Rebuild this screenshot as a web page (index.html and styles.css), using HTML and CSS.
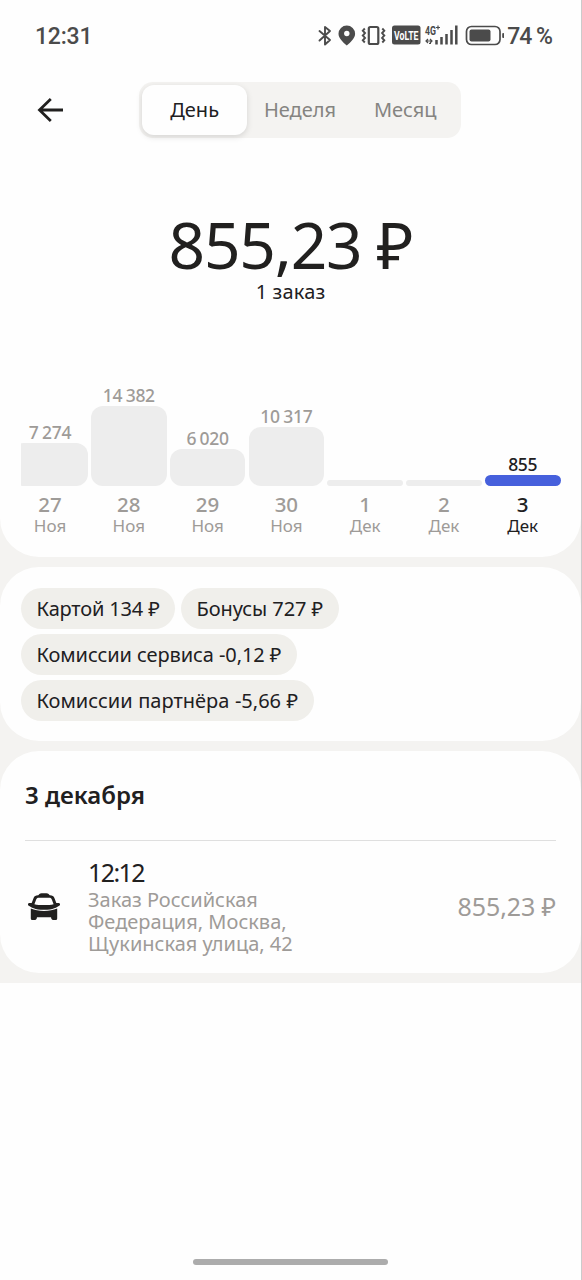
FILE: index.html
```html
<!DOCTYPE html>
<html lang="ru">
<head>
<meta charset="utf-8">
<title>Заработок</title>
<link rel="stylesheet" href="styles.css">
</head>
<body>
<div class="app">
  <div class="page">
    <section class="card card-top">
      <div class="status">
        <span class="clock">12:31</span>
        <div class="status-right">
          <svg class="status-icons" width="187" height="24" viewBox="316 24 187 24">
            <path d="M318.5 31 L329 40 L324 44.5 V27 L329 31 L318.5 40.5" fill="none" stroke="#4b4b4b" stroke-width="1.9" stroke-linejoin="round" stroke-linecap="round"/>
            <path d="M345.800 25.500a8.300 8.300 0 0 0-8.300 8.300c0 4.500 4.500 8.500 8.300 11.700c3.800-3.200 8.300-7.200 8.300-11.700a8.300 8.300 0 0 0-8.300-8.300z" fill="#4b4b4b"/>
            <circle cx="345.800" cy="33.500" r="2.700" fill="#fff"/>
            <rect x="367.800" y="27" width="9.500" height="17" rx="1.500" fill="none" stroke="#4b4b4b" stroke-width="2.200"/>
            <path d="M363.800 28.500l-2 2.200 2.200 2.400-2.200 2.400 2.200 2.400-2.200 2.400 2 2.200M381.300 28.500l2 2.200-2.200 2.400 2.200 2.400-2.200 2.400 2.200 2.400-2 2.200" fill="none" stroke="#4b4b4b" stroke-width="1.900"/>
            <rect x="391" y="25.500" width="28.500" height="19" rx="2.500" fill="#4b4b4b"/>
            <text x="393" y="39.500" class="volte" textLength="24.500" lengthAdjust="spacingAndGlyphs">VoLTE</text>
            <text x="424" y="35" class="net" textLength="11" lengthAdjust="spacingAndGlyphs">4G</text>
            <path d="M435 27.500h4M437 25.500v4" stroke="#4b4b4b" stroke-width="1.200"/>
            <path d="M425 41h6M427 39l-2 2 2 2M430 43.500h-2M429 39l2 2-2 2" fill="none" stroke="#4b4b4b" stroke-width="1.200"/>
            <path d="M435.500 40v4.500M440.500 37v7.500M445.500 34v10.500M450.500 30v14.500M455.300 25.500v19" stroke="#4b4b4b" stroke-width="2.500"/>
            <rect x="465.500" y="26.500" width="33.500" height="18" rx="5" fill="none" stroke="#4b4b4b" stroke-width="1.700"/>
            <rect x="468.500" y="29.500" width="21" height="12" rx="2" fill="#4b4b4b"/>
            <rect x="501.200" y="33" width="2" height="5" rx="1" fill="#4b4b4b"/>
          </svg>
          <span class="percent">74 %</span>
        </div>
      </div>

      <div class="toolbar">
        <svg class="back" width="28" height="28" viewBox="37 96 28 28">
          <path d="M63 110H39.500M50.800 99L39.500 110L50.800 121" fill="none" stroke="#21201f" stroke-width="2.800"/>
        </svg>
        <div class="tabs">
          <span class="tab tab-active">День</span>
          <span class="tab tab-week">Неделя</span>
          <span class="tab tab-month">Месяц</span>
        </div>
      </div>

      <div class="total">855,23 ₽</div>
      <div class="orders">1 заказ</div>

      <div class="chart">
        <div class="col"><span class="value">7 274</span><div class="bar" style="height:43.500px"></div><span class="day">27</span><span class="month">Ноя</span></div>
        <div class="col"><span class="value">14 382</span><div class="bar" style="height:80.500px"></div><span class="day">28</span><span class="month">Ноя</span></div>
        <div class="col"><span class="value">6 020</span><div class="bar" style="height:37px"></div><span class="day">29</span><span class="month">Ноя</span></div>
        <div class="col"><span class="value">10 317</span><div class="bar" style="height:59px"></div><span class="day">30</span><span class="month">Ноя</span></div>
        <div class="col"><div class="bar" style="height:6px"></div><span class="day">1</span><span class="month">Дек</span></div>
        <div class="col"><div class="bar" style="height:6px"></div><span class="day">2</span><span class="month">Дек</span></div>
        <div class="col col-active"><span class="value">855</span><div class="bar" style="height:11px"></div><span class="day">3</span><span class="month">Дек</span></div>
      </div>
    </section>

    <section class="card chips">
      <span class="chip chip-card">Картой 134 ₽</span>
      <span class="chip chip-bonus">Бонусы 727 ₽</span>
      <span class="chip chip-service">Комиссии сервиса -0,12 ₽</span>
      <span class="chip chip-partner">Комиссии партнёра -5,66 ₽</span>
    </section>

    <section class="card history">
      <h2 class="date">3 декабря</h2>
      <div class="order">
        <svg class="car" width="34" height="30" viewBox="27 892 34 30">
          <path d="M38 896.500c.5-2.500 2-3.300 3.500-3.300h5c1.500 0 3 .8 3.500 3.300z" fill="#21201f"/>
          <path fill-rule="evenodd" d="M38 895.300h12c2.300 0 3.700.8 4.500 3l1.800 4.700h2.200c1.600 0 2.200 2 .8 2.700c-2.600 1.400-5.700 4.100-15.300 4.100s-12.700-2.700-15.300-4.100c-1.400-.7-.8-2.700.8-2.700h2.200l1.800-4.700c.8-2.200 2.200-3 4.500-3zM39 897.800c-1.700 0-2.500.6-3 2.100l-1.600 4.300c5 1.200 14.200 1.200 19.200 0l-1.600-4.300c-.5-1.500-1.300-2.100-3-2.100z" fill="#21201f"/>
          <path d="M30.800 908.500c4 1.700 8 2.400 13.200 2.400s9.200-.7 13.200-2.400v10q0 1.500-1.500 1.500h-3q-1.500 0-1.700-2.700h-14q-.2 2.700-1.700 2.700h-3q-1.500 0-1.500-1.500z" fill="#21201f"/>
        </svg>
        <div class="details">
          <span class="time">12:12</span>
          <p class="address"><span class="a1">Заказ Российская</span><br><span class="a2">Федерация, Москва,</span><br><span class="a3">Щукинская улица, 42</span></p>
        </div>
        <span class="price">855,23 ₽</span>
      </div>
    </section>
  </div>
  <div class="home-indicator"></div>
</div>
</body>
</html>
```
FILE: styles.css
```css
* { box-sizing: border-box; }
body { margin: 0; background: #fefefe; font-family: "Noto Sans", "Open Sans", sans-serif; color: #21201f; }
.app { height: 1280px; border-right: 1px solid #cbcbcb; display: flex; flex-direction: column; background: #fefefe; overflow: hidden; }
.page { background: #f4f3f1; display: flex; flex-direction: column; gap: 10px; padding-bottom: 9.500px; white-space: nowrap; }
.card { background: #fefefe; border-radius: 39px; }
.card-top { height: 557px; border-radius: 0 0 39px 39px; display: flex; flex-direction: column; }

.status { height: 73px; padding: 0 30px 0 35px; display: flex; align-items: center; justify-content: space-between; font-family: Roboto, sans-serif; font-weight: 500; font-size: 23px; line-height: 24px; color: #4b4b4b; }
.clock { letter-spacing: -.2px; }
.status-right { display: flex; align-items: center; gap: 3.500px; }
.status-icons { margin-top: -1px; }
.percent { letter-spacing: -1px; margin-right: -1px; }
.volte { font: 700 12px Roboto, sans-serif; fill: #fff; }
.net { font: 700 12px Roboto, sans-serif; fill: #4b4b4b; }

.toolbar { height: 74px; padding: 0 0 0 37px; display: flex; align-items: center; }
.tabs { margin-left: 74px; width: 322px; height: 56px; padding: 3px; border-radius: 14px; background: #f4f3f1; display: flex; font-size: 20px; line-height: 50px; color: #858481; text-align: center; }
.tab { width: 105.300px; }
.tab-active { background: #fefefe; color: #21201f; border-radius: 12px; height: 50px; box-shadow: 0 2px 6px rgba(0, 0, 0, .13); }

.total { margin-top: 66px; height: 64px; line-height: 64px; font-size: 64px; letter-spacing: -1.200px; word-spacing: -.5px; text-align: center; }
.orders { margin-top: 4px; line-height: 22px; font-size: 20px; letter-spacing: .15px; text-align: center; }

.chart { margin: 80px 20.500px 0 21px; height: 154px; display: flex; justify-content: flex-end; align-items: flex-end; gap: 3.200px; overflow: hidden; color: #9e9b98; }
.col { flex: 0 0 75.600px; display: flex; flex-direction: column; align-items: center; }
.value { font-size: 17.500px; line-height: 22px; font-weight: 500; letter-spacing: -.3px; word-spacing: -.8px; }
.bar { width: 100%; border-radius: 12px; background: #ededed; }
.day { margin-top: 7px; font-size: 20.500px; line-height: 22px; font-weight: 500; }
.month { font-size: 17px; line-height: 22px; }
.col-active { color: #21201f; }
.col-active .bar { background: #4660dc; }

.chips { height: 174px; padding: 21px 200px 20px 21px; display: flex; flex-wrap: wrap; align-content: flex-start; gap: 5.500px 6px; }
.chip { height: 40.500px; padding: 0 15.500px; line-height: 41px; border-radius: 21px; background: #f0efeb; font-size: 20px; }
.chip-card { letter-spacing: -.17px; }
.chip-bonus { letter-spacing: -.08px; }
.chip-service { letter-spacing: -.09px; }
.chip-partner { word-spacing: .4px; }

.history { height: 222px; padding: 29px 25px 0; }
.date { margin: 0; height: 61px; line-height: 30px; font-size: 24px; font-weight: 600; border-bottom: 1px solid #dfdfdf; }
.order { display: flex; align-items: center; padding: 16px 0 0 2px; height: 131px; }
.car { margin-top: -15px; }
.details { flex: 1; padding-left: 27px; align-self: flex-start; display: flex; flex-direction: column; }
.time { font-size: 25px; line-height: 30px; letter-spacing: -1.600px; }
.address { margin: 2px 0 0; font-size: 20px; line-height: 22px; color: #9e9b98; }
.price { font-size: 25px; line-height: 30px; letter-spacing: -.1px; color: #9e9b98; margin-top: -17px; }

.home-indicator { margin: auto auto 15px 193px; width: 195px; height: 6px; border-radius: 3px; background: #acacac; }
```
